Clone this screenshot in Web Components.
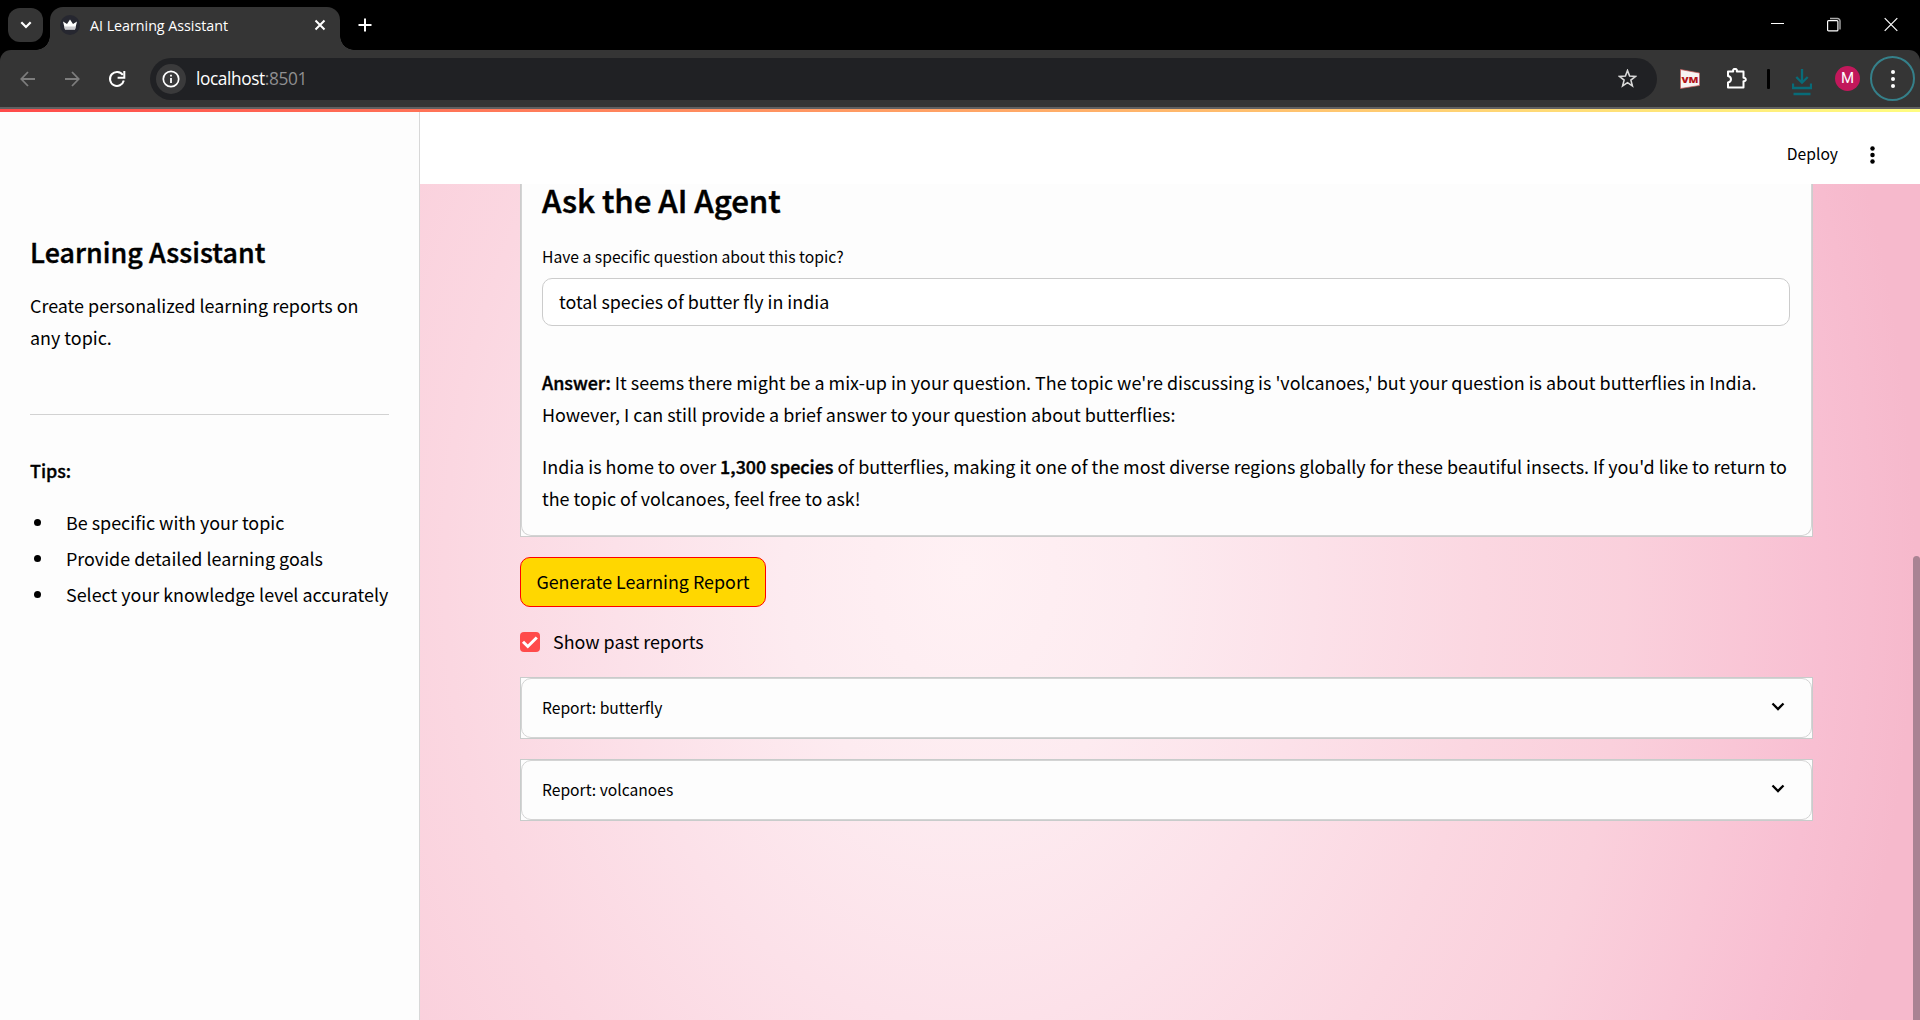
<!DOCTYPE html>
<html lang="en">
<head>
<meta charset="utf-8">
<title>AI Learning Assistant</title>
<style>
html,body{margin:0;height:100%;overflow:hidden}
body{font-family:"Noto Sans CJK SC","Open Sans",sans-serif;color:#000;background:#000}
</style>
</head>
<body>
<browser-window>
  <tab-strip slot="tabs" label="AI Learning Assistant"></tab-strip>
  <nav-bar slot="nav" host="localhost" port=":8501"></nav-bar>
  <side-panel slot="side" heading="Learning Assistant">
    <span>Create personalized learning reports on any topic.</span>
    <tip-item slot="tips">Be specific with your topic</tip-item>
    <tip-item slot="tips">Provide detailed learning goals</tip-item>
    <tip-item slot="tips">Select your knowledge level accurately</tip-item>
  </side-panel>
  <app-header slot="main"></app-header>
  <app-body slot="main">
    <agent-card heading="Ask the AI Agent" label="Have a specific question about this topic?" value="total species of butter fly in india">
      <answer-text><b slot="lead">Answer:</b> It seems there might be a mix-up in your question. The topic we're discussing is 'volcanoes,' but your question is about butterflies in India.<br>However, I can still provide a brief answer to your question about butterflies:</answer-text>
      <answer-text>India is home to over <b>1,300 species</b> of butterflies, making it one of the most diverse regions globally for these beautiful insects. If you'd like to return to<br>the topic of volcanoes, feel free to ask!</answer-text>
    </agent-card>
    <primary-button>Generate Learning Report</primary-button>
    <check-box>Show past reports</check-box>
    <report-row>Report: butterfly</report-row>
    <report-row>Report: volcanoes</report-row>
  </app-body>
</browser-window>
<script>
const make=(name,html)=>customElements.define(name,class extends HTMLElement{
  connectedCallback(){
    if(this.shadowRoot)return;
    const t=document.createElement('template');
    t.innerHTML=html.replace(/\{(\w+)\}/g,(m,k)=>this.getAttribute(k)||'');
    this.attachShadow({mode:'open'}).append(t.content.cloneNode(true));
  }
});
const reset=':host,*{box-sizing:border-box}*{margin:0}svg{display:block;flex:none}';

make('browser-window',`<style>${reset}
:host{display:flex;flex-direction:column;width:1920px;height:1020px;overflow:hidden;background:#fdfdfd}
.edge{height:2px;flex:none;background:#606061}
.view{flex:1;display:flex;position:relative;min-height:0}
.deco{position:absolute;left:0;right:0;top:0;height:3px;background:linear-gradient(90deg,#ff4b4b,#fffd80);z-index:3}
main{flex:1;display:flex;flex-direction:column;min-width:0;min-height:0}
.thumb{position:absolute;right:0;top:447px;width:7px;height:500px;border-radius:4px;background:#a98393;z-index:2}
</style><slot name="tabs"></slot><slot name="nav"></slot><div class="edge"></div>
<div class="view"><div class="deco"></div><slot name="side"></slot><main><slot name="main"></slot></main><div class="thumb"></div></div>`);

make('tab-strip',`<style>${reset}
:host{display:flex;height:50px;flex:none;background:#000;color:#fff;font-family:"Open Sans",sans-serif;align-items:flex-start;padding-left:8px}
.pick{width:35px;height:34px;margin-top:8px;border-radius:12px;background:#353535;display:grid;place-items:center}
.tab{margin:7px 0 0 7px;width:290px;height:43px;background:#353535;border-radius:13px 13px 0 0;display:flex;align-items:center;padding:0 13px 7px 10px;position:relative}
.tab::before,.tab::after{content:"";position:absolute;bottom:0;width:14px;height:14px}
.tab::before{left:-14px;background:radial-gradient(circle at 0 0,#0000 13.5px,#353535 14px)}
.tab::after{right:-14px;background:radial-gradient(circle at 100% 0,#0000 13.5px,#353535 14px)}
.t{flex:1;margin-left:10px;font-size:14.3px;letter-spacing:-.03px;line-height:20px;padding-top:2px;white-space:nowrap}
.plus{margin:18px 0 0 18px}
.win{margin-left:auto;display:flex;margin-top:17px;align-items:flex-start;padding-right:22px}
</style>
<div class="pick"><svg width="12" height="8" viewBox="0 0 12 8"><path d="M1.3 1.3 6 6l4.700-4.700" fill="none" stroke="#fff" stroke-width="2.200"/></svg></div>
<div class="tab"><svg width="20" height="20" viewBox="0 0 20 20"><circle cx="10" cy="10" r="10" fill="#262730"/><path d="M3 6.500 7 9l3-4.500L13 9l4-2.500-2 8H5z" fill="#fff"/><path d="M4.300 11.500h11.400l-.7 3H5z" fill="#c9c9ce"/></svg>
<div class="t">{label}</div><svg width="14" height="14" viewBox="0 0 14 14"><path d="M2.500 2.500l9 9m0-9l-9 9" stroke="#fff" stroke-width="2"/></svg></div>
<svg class="plus" width="14" height="14" viewBox="0 0 14 14"><path d="M7 .5v13M.5 7h13" stroke="#fff" stroke-width="2"/></svg>
<div class="win"><svg width="13" height="14" viewBox="0 0 13 14"><path d="M0 6.500h13" stroke="#fff"/></svg>
<svg style="margin-left:43px" width="14" height="15" viewBox="0 0 14 15"><path d="M3 1.500h7.500a2.500 2.500 0 0 1 2.500 2.500v8.500" fill="none" stroke="#aaa" stroke-width="1.400"/><rect x=".6" y="3.600" width="10.300" height="10.300" rx="1" fill="#000" stroke="#fff" stroke-width="1.200"/></svg>
<svg style="margin-left:43px" width="14" height="15" viewBox="0 0 14 15"><path d="M.7 1.200l12.600 12.600m0-12.600L.7 13.800" stroke="#fff" stroke-width="1.200"/></svg></div>`);

make('nav-bar',`<style>${reset}
:host{display:block;height:57px;flex:none;background:#000;font-family:"Open Sans",sans-serif}
.bar{height:57px;background:#353535;border-radius:11px 11px 0 0;display:flex;align-items:center;padding:0 5px 0 20px}
.bar>*{flex:none}
.omni{width:1507px;height:42px;margin-left:24px;border-radius:21px;background:#202124;display:flex;align-items:center;padding:0 20px 0 6px}
.info{width:30px;height:30px;border-radius:50%;background:#3a3a3b;display:grid;place-items:center}
.url{flex:1;margin-left:10px;font-size:17.300px;letter-spacing:-.4px;color:#fff;line-height:24px;padding-top:1px}
.url span{color:#8f8f91}
.sep{width:3px;height:20px;background:#000;margin-left:20px;border-radius:1px}
.av{width:25px;height:25px;border-radius:50%;background:#c2185b;color:#fff;font:15px/25px Roboto,sans-serif;text-align:center;margin-left:23px}
.menu{width:45px;height:45px;border-radius:50%;border:2.500px solid #35808a;margin-left:10px;display:grid;place-items:center}
</style><div class="bar">
<svg width="15" height="16" viewBox="0 0 15 16"><path d="M15 8H1.500M8 1L1.300 8 8 15" fill="none" stroke="#7d7d7d" stroke-width="1.800"/></svg>
<svg style="margin-left:30px" width="15" height="16" viewBox="0 0 15 16"><path d="M0 8h13.500M7 1l6.700 7L7 15" fill="none" stroke="#7d7d7d" stroke-width="1.800"/></svg>
<svg style="margin-left:28px" width="18" height="18" viewBox="0 0 18 18"><path d="M14.800 5A7 7 0 1 0 15.800 10.500" fill="none" stroke="#fff" stroke-width="2"/><path d="M16.300 1v6.700H9.600" fill="none" stroke="#fff" stroke-width="2"/></svg>
<div class="omni"><div class="info"><svg width="18" height="18" viewBox="0 0 18 18"><circle cx="9" cy="9" r="7.700" fill="none" stroke="#fff" stroke-width="1.700"/><path d="M9 8v5M9 4.800v1.800" stroke="#fff" stroke-width="1.800"/></svg></div>
<div class="url">{host}<span>{port}</span></div>
<svg width="19" height="19" viewBox="0 0 19 19"><path d="M9.500 1.500l2.100 5.500 5.900.4-4.600 3.700 1.500 5.800-4.900-3.200-4.900 3.200 1.500-5.800L1.500 7.400 7.400 7z" fill="none" stroke="#d8d8d8" stroke-width="1.600"/></svg></div>
<svg style="margin-left:23px" width="20" height="20" viewBox="0 0 20 20"><path d="M.5.500L19.500 4v12.500L.5 19.500z" fill="#f7f3f3" stroke="#d05a5a" stroke-width=".7"/><text x="10" y="14" text-anchor="middle" textLength="17" lengthAdjust="spacingAndGlyphs" font-family="Open Sans,sans-serif" font-weight="800" font-size="9.500" fill="#b3141a">VM</text></svg>
<svg style="margin-left:26px" width="21" height="21" viewBox="0 0 21 21"><path d="M2 3.500h5.200C6.700 1.800 7.600.9 9 .9s2.300.9 1.800 2.600h6.700v6.300c1.600-.2 2.300.6 2.300 1.700s-.7 1.900-2.300 1.700v6.300H2v-5c4-.8 4-5.700 0-6.500z" fill="none" stroke="#fff" stroke-width="2" stroke-linejoin="round"/></svg>
<div class="sep"></div>
<svg style="margin-left:22px;margin-top:8px" width="20" height="27" viewBox="0 0 20 27"><path d="M10 0v13M4.300 8L10 13.700 15.700 8M1 14.500V19h18v-4.500M1.500 25h17" fill="none" stroke="#086b78" stroke-width="2.300"/></svg>
<div class="av">M</div>
<div class="menu"><svg width="4" height="18" viewBox="0 0 4 18"><g fill="#fff"><circle cx="2" cy="2" r="2"/><circle cx="2" cy="9" r="2"/><circle cx="2" cy="16" r="2"/></g></svg></div>
</div>`);

make('side-panel',`<style>${reset}
:host{display:block;width:420px;flex:none;background:#fdfdfd;border-right:1px solid #d8d8d8;padding:125px 30px 0}
h2{font-size:26.800px;font-weight:500;-webkit-text-stroke:.45px;line-height:36px;letter-spacing:.07px}
p{font-size:17.920px;line-height:32px;margin-top:19px;width:340px}
hr{border:0;height:1px;background:#d2d2d2;margin:61px 0 39px}
.h{font-size:17.890px;font-weight:500;-webkit-text-stroke:.35px;line-height:32px;margin-bottom:18px}
</style><h2>{heading}</h2><p><slot></slot></p><hr><div class="h">Tips:</div><slot name="tips"></slot>`);

make('tip-item',`<style>${reset}
:host{display:flex;align-items:center;height:36px;font-size:17.910px;line-height:36px;white-space:nowrap;padding-left:4px}
i{width:7px;height:7px;border-radius:50%;background:#000;margin-right:25px}
</style><i></i><slot></slot>`);

make('app-header',`<style>${reset}
:host{display:flex;height:75px;flex:none;background:#fff;align-items:center;justify-content:flex-end;padding:16px 45px 0 0;font-size:15.650px;line-height:24px;gap:32px;position:relative;z-index:1}
span{margin-top:-2px}
</style><span><slot></slot>Deploy</span><svg width="5" height="18" viewBox="0 0 5 18"><circle cx="2.500" cy="2.500" r="2.250"/><circle cx="2.500" cy="9" r="2.250"/><circle cx="2.500" cy="15.500" r="2.250"/></svg>`);

make('app-body',`<style>${reset}
:host{display:flex;flex-direction:column;align-items:flex-start;flex:1;min-height:0;overflow:hidden;padding-left:100px;
background:radial-gradient(ellipse 1000px 1300px at 545px 386px,#fff1f4 0,#fdebf0 18%,#fce1e9 35%,#fbd7e1 52%,#fad0dc 66%,#f9c6d6 78%,#f8bfd2 86%,#f6b9cc 95%)}
</style><slot></slot>`);

make('agent-card',`<style>${reset}
:host{display:block;width:1293px;height:353px;flex:none;border:1px solid #ccc;border-top:0;background:#fdfdfd}
.in{height:352px;border:1px solid #d4d4d4;border-top:0;border-radius:0 0 10px 10px;padding:0 20px}
h2{font-size:31.300px;font-weight:500;-webkit-text-stroke:.5px;line-height:31px;letter-spacing:-.07px}
label{display:block;font-size:15.680px;line-height:24px;margin-top:30px;margin-bottom:9px}
.f{height:48px;margin:0 0 40px;border:1px solid #ccc;border-radius:10px;background:#fff;padding-left:16px;font-size:17.890px;line-height:45px;width:1248px}
</style><div class="in"><h2>{heading}</h2><label>{label}</label><div class="f">{value}</div><slot></slot></div>`);

make('answer-text',`<style>${reset}
:host{display:block;font-size:17.918px;line-height:32px;white-space:nowrap;margin-bottom:20px}
::slotted(b){font-weight:500;-webkit-text-stroke:.4px}
</style><slot name="lead"></slot><slot></slot>`);

make('primary-button',`<style>${reset}
:host{display:flex;justify-content:center;width:246px;height:50px;flex:none;margin-top:20px;border:1px solid #f00;border-radius:10px;background:#ffd700;font-size:17.890px;line-height:46px;white-space:nowrap}
</style><slot></slot>`);

make('check-box',`<style>${reset}
:host{display:flex;align-items:center;height:32px;margin-top:19px;gap:13px;font-size:17.890px;line-height:32px}
span{margin-top:-2px}
</style><svg width="20" height="20" viewBox="0 0 20 20"><rect width="20" height="20" rx="4" fill="#ff4b4b"/><path d="M3 9.800l4.800 4.700L16.800 5.500" fill="none" stroke="#fff" stroke-width="3"/></svg><span><slot></slot></span>`);

make('report-row',`<style>${reset}
:host{display:block;width:1293px;height:62px;flex:none;border:1px solid #c8cccb;background:#fdfdfd;margin-top:20px}
:host(:first-of-type){margin-top:19px}
.in{height:60px;border:1px solid #d4d4d4;border-radius:10px;display:flex;align-items:center;justify-content:space-between;padding:0 26px 0 20px;font-size:15.650px;line-height:24px}
svg{margin-top:-3px}
</style><div class="in"><span><slot></slot></span><svg width="14" height="9" viewBox="0 0 14 9"><path d="M1.500 1.500L7 7l5.500-5.500" fill="none" stroke="#000" stroke-width="2.300"/></svg></div>`);
</script>
</body>
</html>
